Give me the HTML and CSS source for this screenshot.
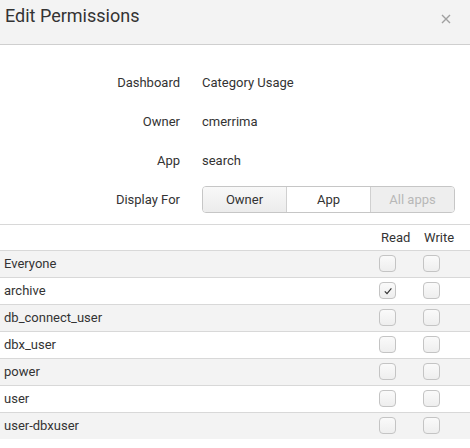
FILE: index.html
```html
<!DOCTYPE html>
<html>
<head>
<meta charset="utf-8">
<link rel="stylesheet" href="styles.css">
</head>
<body>
<div class="modal">
  <div class="header">
    <h1 class="title">Edit Permissions</h1>
    <svg class="close" width="10" height="10" viewBox="0 0 10 10"><path d="M1 1 L9 9 M9 1 L1 9" stroke="#a0a0a0" stroke-width="1.4" fill="none"/></svg>
  </div>
  <div class="form">
    <div class="label">Dashboard</div><div class="value">Category Usage</div>
    <div class="label">Owner</div><div class="value">cmerrima</div>
    <div class="label">App</div><div class="value">search</div>
    <div class="label">Display For</div>
    <div class="value">
      <div class="btn-group">
        <div class="btn">Owner</div>
        <div class="btn active">App</div>
        <div class="btn disabled">All apps</div>
      </div>
    </div>
  </div>
  <div class="table">
    <div class="row head"><div class="name"></div><div class="col read">Read</div><div class="col write">Write</div></div>
    <div class="row odd"><div class="name">Everyone</div><div class="col"><span class="cb"></span></div><div class="col"><span class="cb"></span></div></div>
    <div class="row"><div class="name">archive</div><div class="col"><span class="cb"><svg width="10" height="10" viewBox="0 0 10 10"><path d="M1.8 5.4 L4 7.6 L8.4 2.4" stroke="#333" stroke-width="1.2" fill="none"/></svg></span></div><div class="col"><span class="cb"></span></div></div>
    <div class="row odd"><div class="name">db_connect_user</div><div class="col"><span class="cb"></span></div><div class="col"><span class="cb"></span></div></div>
    <div class="row"><div class="name">dbx_user</div><div class="col"><span class="cb"></span></div><div class="col"><span class="cb"></span></div></div>
    <div class="row odd"><div class="name">power</div><div class="col"><span class="cb"></span></div><div class="col"><span class="cb"></span></div></div>
    <div class="row"><div class="name">user</div><div class="col"><span class="cb"></span></div><div class="col"><span class="cb"></span></div></div>
    <div class="row odd last"><div class="name">user-dbxuser</div><div class="col"><span class="cb"></span></div><div class="col"><span class="cb"></span></div></div>
  </div>
</div>
</body>
</html>
```
FILE: styles.css
```css
* { box-sizing: border-box; }
html, body { margin: 0; padding: 0; background: #fff; }
body { font-family: Roboto, "Liberation Sans", Arial, sans-serif; color: #333; font-size: 13px; width: 470px; }
.header {
  height: 45px;
  background: #f3f3f3;
  border-bottom: 1px solid #cfcfcf;
  display: flex;
  align-items: flex-start;
  justify-content: space-between;
  padding: 4px 19px 0 5px;
}
.title { margin: 0; font-size: 18px; font-weight: 400; line-height: 24px; color: #333; }
.close { margin-top: 10px; }
.form {
  display: grid;
  grid-template-columns: 180px 1fr;
  grid-auto-rows: 27px;
  column-gap: 22px;
  row-gap: 12px;
  padding: 24px 15px 0 0;
  margin-bottom: 11px;
}
.label, .value { display: flex; align-items: center; }
.label { justify-content: flex-end; }
.btn-group {
  display: flex;
  width: 100%;
  height: 27px;
  border: 1px solid #c6c6c6;
  border-radius: 4px;
  overflow: hidden;
}
.btn {
  flex: 1;
  display: flex;
  align-items: center;
  justify-content: center;
  background: linear-gradient(#f8f8f8, #ececec);
  border-right: 1px solid #d0d0d0;
  color: #333;
}
.btn.active { background: #fff; }
.btn.disabled { background: #eeeeee; color: #b8b8b8; border-right: none; }
.table { border-top: 1px solid #d8d8d8; }
.row {
  display: grid;
  grid-template-columns: 1fr 44px 47px;
  height: 27px;
  align-items: center;
  border-bottom: 1px solid #d8d8d8;
  padding-bottom: 1px;
}
.row.head { height: 26px; }
.row.odd { background: #f3f3f3; }
.row.last { border-bottom: none; height: 26px; }
.name { padding-left: 4px; }
.col { display: flex; align-items: center; }
.read { padding-left: 2px; }
.write { padding-left: 1px; }
.cb {
  width: 17px;
  height: 17px;
  border: 1px solid #c4c4c4;
  border-radius: 4px;
  background: linear-gradient(#fafafa, #eeeeee);
  display: flex;
  align-items: center;
  justify-content: center;
}
.cb svg { display: block; }
```
